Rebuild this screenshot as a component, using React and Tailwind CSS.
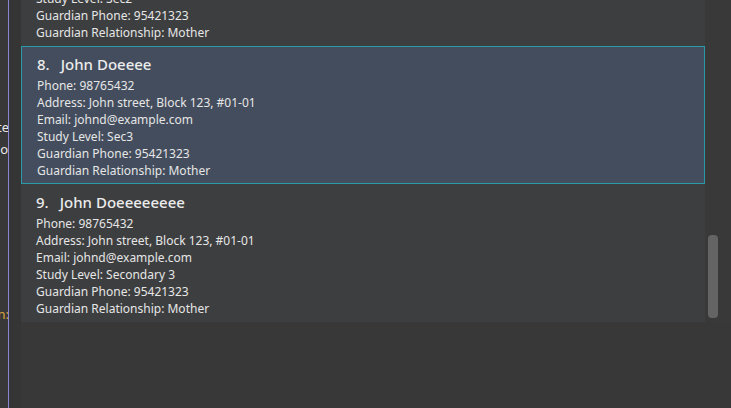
import React from 'react';

const people = [
  { idx: 7, name: 'John Doee', level: 'Sec2' },
  { idx: 8, name: 'John Doeeee', level: 'Sec3', selected: true },
  { idx: 9, name: 'John Doeeeeeeee', level: 'Secondary 3' },
];

function PersonCard({ p }) {
  const base = p.selected
    ? 'border border-[#2a9aa6] bg-[#434d5d] px-[15px]'
    : 'border border-transparent px-[14px]';
  return (
    <div className={`${base} h-[138px] pt-[7px] text-[#e6e6e6]`}>
      <div className="flex items-center gap-[11px] text-[15px] leading-[20px] font-medium text-[#ececec]">
        <span>{p.idx}.</span>
        <span>{p.name}</span>
      </div>
      <div className="mt-[3px] text-[12px] leading-[17px]">
        <div>Phone: 98765432</div>
        <div>Address: John street, Block 123, #01-01</div>
        <div>Email: johnd@example.com</div>
        <div>Study Level: {p.level}</div>
        <div>Guardian Phone: 95421323</div>
        <div>Guardian Relationship: Mother</div>
      </div>
    </div>
  );
}

export default function App() {
  return (
    <div
      className="flex h-[408px] w-[731px] overflow-hidden bg-[#383838]"
      style={{ fontFamily: '"Noto Sans", "Open Sans", sans-serif' }}
    >
      <div className="relative w-[8px] shrink-0 overflow-hidden text-[13px] text-[#e8e8e8]">
        <div className="absolute -right-[1px] top-[119px] leading-[17px]">te</div>
        <div className="absolute right-0 top-[141px] leading-[17px]">o</div>
        <div className="absolute -right-[1px] top-[306px] leading-[17px] text-[#d9a441]">n:</div>
      </div>
      <div className="w-px shrink-0 bg-[#8c84d6]" />
      <div className="w-[12px] shrink-0 bg-[#353535]" />
      <div className="flex h-[322px] flex-1">
        <div className="flex-1 overflow-hidden bg-[#3d3e40]">
          <div className="-mt-[92px]">
            {people.map(p => (
              <PersonCard key={p.idx} p={p} />
            ))}
          </div>
        </div>
        <div className="flex w-[26px] shrink-0 items-end justify-start bg-[#393939] pb-[4px] pl-[3px]">
          <div className="h-[83px] w-[10px] rounded-[4px] bg-[#646464]" />
        </div>
      </div>
    </div>
  );
}
